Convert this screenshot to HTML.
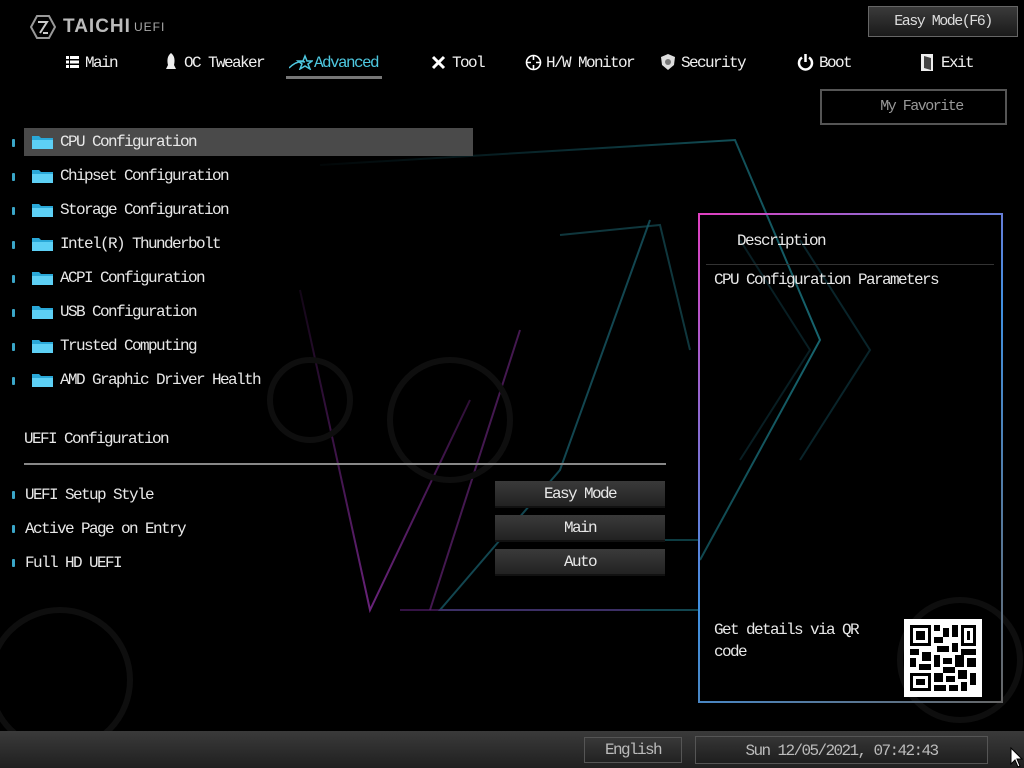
<!DOCTYPE html>
<html><head><meta charset="utf-8"><style>
*{margin:0;padding:0;box-sizing:border-box}
body{width:1024px;height:768px;background:#000;overflow:hidden;position:relative;font-family:"Liberation Mono","DejaVu Sans Mono",monospace;color:#e8e8e8}
.t{position:absolute;font-size:16px;letter-spacing:-1.6px;white-space:nowrap;line-height:18px}
.nav{position:absolute;top:54px;font-size:16px;letter-spacing:-1.6px;color:#f0f0f0;white-space:nowrap;line-height:18px}
.ic{position:absolute;top:54px}
.fold{position:absolute;left:32px;width:21px;height:15px}
.mk{position:absolute;left:12px;width:3px;height:8px;background:#3aa6c8;border-radius:1px}
.btn{position:absolute;left:495px;width:170px;height:27px;background:linear-gradient(#3a3a3a,#222);border-bottom:2px solid #111;text-align:center;font-size:16px;letter-spacing:-1.6px;line-height:26px;color:#e8e8e8}
</style></head><body>
<svg width="1024" height="768" style="position:absolute;left:0;top:0">
<defs>
<linearGradient id="tl" x1="0" x2="1"><stop offset="0" stop-color="#1d6f80" stop-opacity="0.1"/><stop offset="1" stop-color="#29b6c8"/></linearGradient>
<linearGradient id="pk" x1="0" x2="0" y1="0" y2="1"><stop offset="0" stop-color="#b03ad0" stop-opacity="0.2"/><stop offset="1" stop-color="#c040e0"/></linearGradient>
</defs>
<g fill="none" stroke-width="2" opacity="0.55">
<path d="M320,165 L735,140 L820,340 L700,560" stroke="url(#tl)"/>
<path d="M560,235 L660,225 L690,350" stroke="#2a8fa0" opacity="0.7"/>
<path d="M300,290 L370,610 L470,400" stroke="url(#pk)"/>
<path d="M650,220 L560,470 L440,610 L700,610" stroke="#2aa0b8" opacity="0.8"/>
<path d="M400,610 L640,610" stroke="#a03ad0" opacity="0.6"/>
<path d="M430,610 L520,330" stroke="#b040d0" opacity="0.7"/>
<path d="M800,240 L870,350 L800,460" stroke="#1e7080" opacity="0.6"/>
<path d="M740,240 L810,350 L740,460" stroke="#1e7080" opacity="0.5"/>
<path d="M520,540 L700,540" stroke="#29b6c8" opacity="0.6"/>
</g>
<g fill="none" stroke="#0e0e0e" stroke-width="6">
<circle cx="450" cy="420" r="60"/><circle cx="60" cy="680" r="70"/><circle cx="960" cy="660" r="60"/><circle cx="310" cy="400" r="40"/>
</g>
</svg>

<svg style="position:absolute;left:30px;top:15px" width="26" height="24" viewBox="0 0 26 24"><polygon points="7,1 19,1 25,12 19,23 7,23 1,12" fill="none" stroke="#999" stroke-width="2"/><path d="M8,7 H17 L10,18 M13,18 H18" stroke="#ccc" stroke-width="2" fill="none"/></svg>
<div style="position:absolute;left:63px;top:16px;font-family:'Liberation Sans',sans-serif;font-size:19px;font-weight:bold;color:#bbb;letter-spacing:1px">TAICHI</div>
<div style="position:absolute;left:134px;top:20px;font-family:'Liberation Sans',sans-serif;font-size:12px;color:#aaa;letter-spacing:1px">UEFI</div>

<div style="position:absolute;left:868px;top:6px;width:150px;height:31px;border:1px solid #666;background:linear-gradient(#3a3a3a,#1a1a1a);text-align:center;line-height:29px;font-size:15px;letter-spacing:-1.5px;color:#ddd">Easy Mode(F6)</div>

<svg class="ic" style="left:66px;top:56px" width="13" height="12"><rect x="0" y="0" width="3" height="3" fill="#fff"/><rect x="0" y="4.5" width="3" height="3" fill="#fff"/><rect x="0" y="9" width="3" height="3" fill="#fff"/><rect x="4" y="0" width="9" height="3" fill="#fff"/><rect x="4" y="4.5" width="9" height="3" fill="#fff"/><rect x="4" y="9" width="9" height="3" fill="#fff"/></svg>
<div class="nav" style="left:85px">Main</div>
<svg class="ic" style="left:164px;top:53px" width="14" height="18"><path d="M7,0 C11,3 11,8 10,12 L12,16 H2 L4,12 C3,8 3,3 7,0Z" fill="#eee"/></svg>
<div class="nav" style="left:184px">OC Tweaker</div>
<svg class="ic" style="left:289px;top:54px" width="24" height="16"><path d="M0,14 Q8,6 16,8" stroke="#4ec8e0" fill="none" stroke-width="1.5"/><path d="M16,2 L18,7 L23,7 L19,10 L21,15 L16,12 L11,15 L13,10 L9,7 L14,7Z" fill="none" stroke="#4ec8e0" stroke-width="1.5"/></svg>
<div class="nav" style="left:314px;color:#4ec8e0">Advanced</div>
<div style="position:absolute;left:286px;top:76px;width:96px;height:3px;background:#777"></div>
<svg class="ic" style="left:431px;top:55px" width="15" height="15"><path d="M2,2 L13,13 M13,2 L2,13" stroke="#fff" stroke-width="3"/></svg>
<div class="nav" style="left:452px">Tool</div>
<svg class="ic" style="left:525px;top:54px" width="17" height="17"><circle cx="8.5" cy="8.5" r="7" fill="none" stroke="#fff" stroke-width="1.6"/><path d="M1,8.5H6 M11,8.5H16 M8.5,1V6 M8.5,11V16" stroke="#fff" stroke-width="1.6"/></svg>
<div class="nav" style="left:546px">H/W Monitor</div>
<svg class="ic" style="left:660px;top:54px" width="16" height="16"><path d="M8,0 L15,3 L14,11 L8,16 L2,11 L1,3Z" fill="#ddd"/><circle cx="8" cy="8" r="3" fill="#777"/></svg>
<div class="nav" style="left:681px">Security</div>
<svg class="ic" style="left:797px;top:54px" width="17" height="17"><path d="M5,3.5 A6.5,6.5 0 1 0 12,3.5" fill="none" stroke="#fff" stroke-width="2.5"/><path d="M8.5,0 V8" stroke="#fff" stroke-width="2.5"/></svg>
<div class="nav" style="left:819px">Boot</div>
<svg class="ic" style="left:921px;top:54px" width="12" height="17"><rect x="0" y="0" width="12" height="17" fill="#eee"/><path d="M3,2 L10,4 V16 L3,14Z" fill="#444"/></svg>
<div class="nav" style="left:941px">Exit</div>

<div style="position:absolute;left:820px;top:89px;width:187px;height:36px;border:2px solid #555;text-align:center;line-height:32px;font-size:15px;letter-spacing:-1.5px;color:#999;padding-left:16px">My Favorite</div>

<div style="position:absolute;left:24px;top:128px;width:449px;height:28px;background:#4a4a4a"></div>

<div class="mk" style="top:139px"></div><svg class="fold" style="top:134px" viewBox="0 0 21 15"><path d="M0,2 H7 L9,4 H21 V15 H0Z" fill="#2aa8d8"/><path d="M0,6 H21 V15 H0Z" fill="#5dd0f5"/></svg><div class="t" style="left:60px;top:133px">CPU Configuration</div>
<div class="mk" style="top:173px"></div><svg class="fold" style="top:168px" viewBox="0 0 21 15"><path d="M0,2 H7 L9,4 H21 V15 H0Z" fill="#2aa8d8"/><path d="M0,6 H21 V15 H0Z" fill="#5dd0f5"/></svg><div class="t" style="left:60px;top:167px">Chipset Configuration</div>
<div class="mk" style="top:207px"></div><svg class="fold" style="top:202px" viewBox="0 0 21 15"><path d="M0,2 H7 L9,4 H21 V15 H0Z" fill="#2aa8d8"/><path d="M0,6 H21 V15 H0Z" fill="#5dd0f5"/></svg><div class="t" style="left:60px;top:201px">Storage Configuration</div>
<div class="mk" style="top:241px"></div><svg class="fold" style="top:236px" viewBox="0 0 21 15"><path d="M0,2 H7 L9,4 H21 V15 H0Z" fill="#2aa8d8"/><path d="M0,6 H21 V15 H0Z" fill="#5dd0f5"/></svg><div class="t" style="left:60px;top:235px">Intel(R) Thunderbolt</div>
<div class="mk" style="top:275px"></div><svg class="fold" style="top:270px" viewBox="0 0 21 15"><path d="M0,2 H7 L9,4 H21 V15 H0Z" fill="#2aa8d8"/><path d="M0,6 H21 V15 H0Z" fill="#5dd0f5"/></svg><div class="t" style="left:60px;top:269px">ACPI Configuration</div>
<div class="mk" style="top:309px"></div><svg class="fold" style="top:304px" viewBox="0 0 21 15"><path d="M0,2 H7 L9,4 H21 V15 H0Z" fill="#2aa8d8"/><path d="M0,6 H21 V15 H0Z" fill="#5dd0f5"/></svg><div class="t" style="left:60px;top:303px">USB Configuration</div>
<div class="mk" style="top:343px"></div><svg class="fold" style="top:338px" viewBox="0 0 21 15"><path d="M0,2 H7 L9,4 H21 V15 H0Z" fill="#2aa8d8"/><path d="M0,6 H21 V15 H0Z" fill="#5dd0f5"/></svg><div class="t" style="left:60px;top:337px">Trusted Computing</div>
<div class="mk" style="top:377px"></div><svg class="fold" style="top:372px" viewBox="0 0 21 15"><path d="M0,2 H7 L9,4 H21 V15 H0Z" fill="#2aa8d8"/><path d="M0,6 H21 V15 H0Z" fill="#5dd0f5"/></svg><div class="t" style="left:60px;top:371px">AMD Graphic Driver Health</div>

<div class="t" style="left:24px;top:430px">UEFI Configuration</div>
<div style="position:absolute;left:24px;top:463px;width:642px;height:2px;background:#888"></div>

<div class="mk" style="top:491px"></div><div class="t" style="left:25px;top:486px">UEFI Setup Style</div>
<div class="mk" style="top:525px"></div><div class="t" style="left:25px;top:520px">Active Page on Entry</div>
<div class="mk" style="top:559px"></div><div class="t" style="left:25px;top:554px">Full HD UEFI</div>
<div class="btn" style="top:481px">Easy Mode</div>
<div class="btn" style="top:515px">Main</div>
<div class="btn" style="top:549px">Auto</div>

<div style="position:absolute;left:698px;top:213px;width:305px;height:490px;border:2px solid;border-image:linear-gradient(135deg,#e040c0,#4090e0 50%,#666) 1"></div>
<div class="t" style="left:737px;top:232px">Description</div>
<div style="position:absolute;left:706px;top:264px;width:288px;height:1px;background:#333"></div>
<div class="t" style="left:714px;top:271px">CPU Configuration Parameters</div>
<div class="t" style="left:714px;top:621px">Get details via QR</div>
<div class="t" style="left:714px;top:643px">code</div>
<svg style="position:absolute;left:904px;top:619px" width="78" height="78" viewBox="0 0 26 26"><rect width="26" height="26" fill="#fff"/>
<g fill="#000"><path d="M2,2h7v7h-7z M19,2h5v7h-5z M2,18h7v6h-7z" /></g>
<g fill="#fff"><path d="M3,3h5v5h-5z M20,3h3v5h-3z M3,19h5v4h-5z"/></g>
<g fill="#000"><path d="M4,4h3v3h-3z M21,4h1v3h-1z M4,20h3v2h-3z M10,2h2v2h-2z M13,3h2v3h-2z M16,2h2v4h-2z M10,6h3v2h-3z M11,9h4v2h-4z M2,10h3v2h-3z M6,11h3v3h-3z M16,8h2v3h-2z M19,10h5v2h-5z M2,13h2v3h-2z M10,12h2v4h-2z M13,13h3v2h-3z M17,12h3v4h-3z M21,13h3v3h-3z M5,15h4v2h-4z M13,16h4v2h-4z M10,18h3v3h-3z M14,19h3v2h-3z M18,17h3v3h-3z M22,18h2v4h-2z M10,22h4v2h-4z M15,22h3v2h-3z M19,21h2v3h-2z"/></g></svg>

<div style="position:absolute;left:0;top:731px;width:1024px;height:37px;background:linear-gradient(#3a3a3a,#202020)"></div>
<div style="position:absolute;left:584px;top:737px;width:98px;height:26px;border:1px solid #555;background:linear-gradient(#383838,#222);text-align:center;line-height:24px;font-size:16px;letter-spacing:-1.6px;color:#bbb">English</div>
<div style="position:absolute;left:695px;top:736px;width:293px;height:28px;border:1px solid #555;background:linear-gradient(#353535,#1e1e1e);text-align:center;line-height:28px;font-size:16px;letter-spacing:-1.6px;color:#bbb">Sun 12/05/2021, 07:42:43</div>
<svg style="position:absolute;left:1010px;top:747px" width="14" height="21" viewBox="0 0 14 21"><path d="M1,1 L1,17 L5,13 L8,20 L10,19 L7,12 L12,12 Z" fill="#fff" stroke="#000"/></svg>
</body></html>
